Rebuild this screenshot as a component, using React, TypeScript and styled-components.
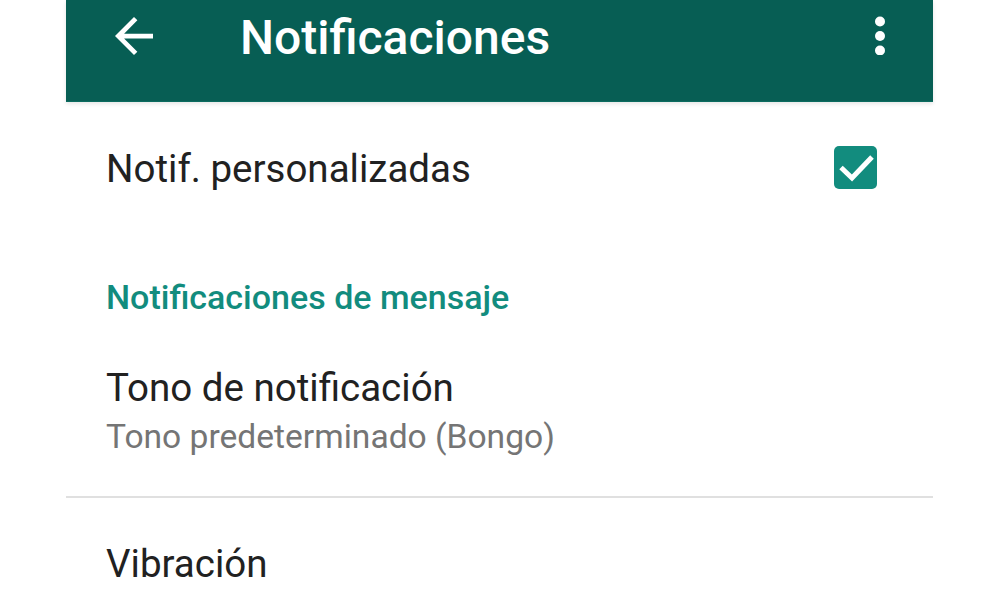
import React from "react";
import styled, { createGlobalStyle } from "styled-components";

const GlobalStyle = createGlobalStyle`
  body {
    margin: 0;
    background: #ffffff;
    font-family: Roboto, "Noto Sans", Arial, sans-serif;
  }
`;

const Screen = styled.div`
  width: 867px;
  margin-left: 66px;
  display: flex;
  flex-direction: column;
`;

const AppBar = styled.header`
  height: 102px;
  box-sizing: border-box;
  padding: 16px 48px 0 49px;
  display: flex;
  align-items: flex-start;
  background: #075e54;
  border-bottom: 1px solid #0b6b5f;
  box-shadow: 0 2px 4px rgba(0, 0, 0, 0.1);
  color: #ffffff;
`;

const IconSlot = styled.div`
  height: 39px;
  display: flex;
  align-items: center;
`;

const Title = styled.h1`
  margin: 2px 0 0 87px;
  flex: 1;
  font-size: 48px;
  line-height: 39px;
  font-weight: 500;
`;

const CheckRow = styled.div`
  height: 130px;
  padding: 0 56px 0 40px;
  display: flex;
  align-items: center;
  justify-content: space-between;
`;

const PrimaryText = styled.div<{ $nudge?: number }>`
  margin-top: ${(p) => p.$nudge ?? 0}px;
  font-size: 38.5px;
  line-height: 1;
  color: #212121;
`;

const Checkbox = styled.div`
  width: 43px;
  height: 43px;
  border-radius: 5px;
  background: #128c7e;
  display: flex;
  align-items: center;
  justify-content: center;
`;

const SectionHeader = styled.div`
  margin-top: 48px;
  padding-left: 40px;
  font-size: 34px;
  line-height: 1;
  font-weight: 500;
  color: #128c7e;
`;

const PrefItem = styled.div<{ $top: number; $bottom?: number }>`
  padding: ${(p) => p.$top}px 40px ${(p) => p.$bottom ?? 0}px;
  display: flex;
  flex-direction: column;
  gap: 12px;
`;

const Summary = styled.div`
  font-size: 33.6px;
  line-height: 34px;
  color: #757575;
`;

const Divider = styled.hr`
  margin: 0;
  border: none;
  height: 2px;
  background: #e0e0e0;
`;

const BackArrow = () => (
  <svg width="38" height="38" viewBox="4 4 16 16" fill="#ffffff">
    <path d="M20 11H7.83l5.59-5.59L12 4l-8 8 8 8 1.41-1.41L7.83 13H20v-2z" />
  </svg>
);

const MoreDots = () => (
  <svg width="10" height="39" viewBox="0 0 10 39" fill="#ffffff">
    <circle cx="5" cy="5.5" r="5" />
    <circle cx="5" cy="20" r="5" />
    <circle cx="5" cy="34.5" r="5" />
  </svg>
);

const CheckMark = () => (
  <svg width="43" height="43" viewBox="0 0 43 43">
    <path
      d="M7 21.5l11 10.5L38 11"
      fill="none"
      stroke="#ffffff"
      strokeWidth="5"
    />
  </svg>
);

const App: React.FC = () => {
  return (
    <>
      <GlobalStyle />
      <Screen>
        <AppBar>
          <IconSlot>
            <BackArrow />
          </IconSlot>
          <Title>Notificaciones</Title>
          <IconSlot>
            <MoreDots />
          </IconSlot>
        </AppBar>

        <CheckRow>
          <PrimaryText $nudge={4}>Notif. personalizadas</PrimaryText>
          <Checkbox>
            <CheckMark />
          </Checkbox>
        </CheckRow>

        <SectionHeader>Notificaciones de mensaje</SectionHeader>

        <PrefItem $top={55} $bottom={42}>
          <PrimaryText>Tono de notificación</PrimaryText>
          <Summary>Tono predeterminado (Bongo)</Summary>
        </PrefItem>

        <Divider />

        <PrefItem $top={47}>
          <PrimaryText>Vibración</PrimaryText>
        </PrefItem>
      </Screen>
    </>
  );
};

export default App;
